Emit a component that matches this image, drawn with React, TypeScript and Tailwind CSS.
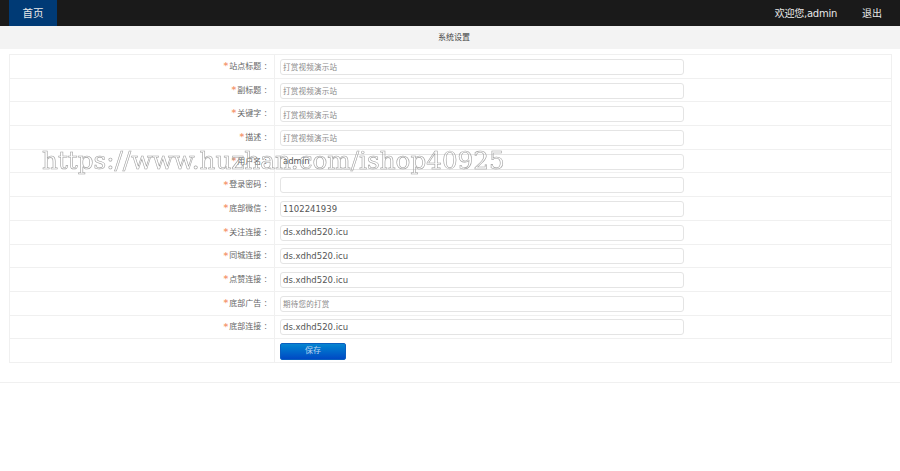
import React from 'react';

const fields = [
  { label: '站点标题', value: '打赏视频演示站', serif: true },
  { label: '副标题', value: '打赏视频演示站', serif: true },
  { label: '关键字', value: '打赏视频演示站', serif: true },
  { label: '描述', value: '打赏视频演示站', serif: true },
  { label: '用户名', value: 'admin' },
  { label: '登录密码', value: '' },
  { label: '底部微信', value: '1102241939' },
  { label: '关注连接', value: 'ds.xdhd520.icu' },
  { label: '同城连接', value: 'ds.xdhd520.icu' },
  { label: '点赞连接', value: 'ds.xdhd520.icu' },
  { label: '底部广告', value: '期待您的打赏', serif: true },
  { label: '底部连接', value: 'ds.xdhd520.icu' },
];

const sans = "font-['DejaVu_Sans','Noto_Sans_CJK_SC',sans-serif]";

export default function App() {
  return (
    <div className={`relative h-[471px] w-[900px] overflow-hidden bg-white ${sans}`}>
      <header className="flex h-[26px] items-stretch justify-between bg-[#1a1a1a] text-[#e8e8e8]">
        <a className="ml-[9px] flex w-[48px] items-center justify-center bg-[#003a75] pt-[1px] text-[10.5px]">首页</a>
        <div className="flex items-center pt-[1px] text-[10px]">
          <span className="mr-[25px] tracking-[-0.25px]">欢迎您,admin</span>
          <span className="mr-[18px]">退出</span>
        </div>
      </header>

      <div className="flex h-[23px] items-center justify-center bg-[#f3f3f3] pl-[8px] text-[8px] text-[#444]">系统设置</div>

      <div className="mx-[9px] mt-[5px] w-[883px] border border-[#f0f0f0]">
        {fields.map((f) => (
          <div key={f.label} className="flex h-[23.7px] border-b border-[#f0f0f0]">
            <div className="flex w-[265px] items-center justify-end border-r border-[#f0f0f0] pt-[1px] pr-[7px] text-[8px] text-[#666]">
              <span className="mr-[1px] text-[9px] font-bold text-[#f59a72]">*</span>
              {f.label}
              <span className="ml-[3px]">:</span>
            </div>
            <div className="flex items-center pt-[1px] pl-[5px]">
              <div
                className={`flex h-[16px] w-[404px] items-center rounded-[3px] border border-[#e4e4e4] px-[2px] ${
                  f.serif
                    ? "font-['Noto_Sans_CJK_SC',serif] text-[7.5px] tracking-[0.25px] text-[#8a8a8a]"
                    : 'text-[8.5px] text-[#555]'
                }`}
              >
                {f.value}
              </div>
            </div>
          </div>
        ))}
        <div className="flex h-[22.6px]">
          <div className="w-[265px] border-r border-[#f0f0f0]" />
          <div className="flex items-center pt-[1px] pl-[5px]">
            <button className="h-[17px] w-[66px] rounded-[2px] border border-[#0a5fc0] bg-gradient-to-b from-[#0a85d0] to-[#0048c4] text-[8px] text-[#bcd4f0]">
              保存
            </button>
          </div>
        </div>
      </div>

      <div className="mt-[19px] border-t border-[#f0f0f0]" />

      <div className="absolute left-[42px] top-[144px] font-['DejaVu_Serif',serif] text-[24.7px] leading-[34px] whitespace-nowrap text-transparent [will-change:transform] [-webkit-text-stroke:0.6px_#a0a0a0]">
        https://www.huzhan.com/ishop40925
      </div>
    </div>
  );
}
